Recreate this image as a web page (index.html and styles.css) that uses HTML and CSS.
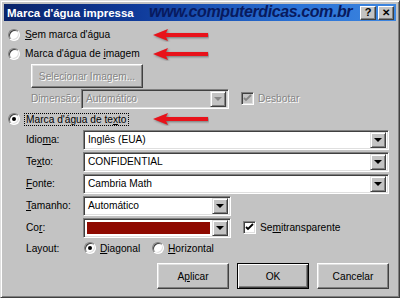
FILE: index.html
```html
<!DOCTYPE html>
<html lang="pt">
<head>
  <meta charset="UTF-8" />
  <title>Marca d'água impressa</title>
  <link rel="stylesheet" href="styles.css">
</head>
<body>
  <div class="window">
    <!-- ==== BARRA DE TÍTULO ==== -->
    <div class="titlebar">
      <span class="title">Marca d'água impressa</span>
      <span class="site">www.computerdicas.com.br</span>
      <div class="tb-buttons">
        <span class="tb-btn">?</span>
        <span class="tb-btn tb-close">✕</span>
      </div>
    </div>

    <!-- ==== CONTEÚDO ==== -->
    <div class="content">
      <div class="row r-radio">
        <span class="radio"></span>
        <span><u>S</u>em marca d'água</span>
      </div>
      <div class="row r-radio">
        <span class="radio"></span>
        <span>Marca d'água de <u>i</u>magem</span>
      </div>

      <div class="indent">
        <div class="row r-btn">
          <span class="button btn-disabled">Selecionar Imagem...</span>
        </div>
        <div class="row r-field">
          <span class="label label-dim disabled">Dimensão:</span>
          <span class="combo combo-short combo-disabled">
            <span class="combo-text">Automático</span>
            <span class="drop"><span class="tri"></span></span>
          </span>
          <span class="check check-disabled"><svg viewBox="0 0 9 9"><path d="M1 4 L3 6 L8 1" /></svg></span>
          <span class="disabled">Desbotar</span>
        </div>
      </div>

      <div class="row r-radio r-radio3">
        <span class="radio checked"></span>
        <span class="focus">Marca d'água de te<u>x</u>to</span>
      </div>

      <div class="form">
        <div class="row r-field">
          <span class="label">Idio<u>m</u>a:</span>
          <span class="combo combo-long">
            <span class="combo-text">Inglês (EUA)</span>
            <span class="drop"><span class="tri"></span></span>
          </span>
        </div>
        <div class="row r-field">
          <span class="label">Te<u>x</u>to:</span>
          <span class="combo combo-long">
            <span class="combo-text">CONFIDENTIAL</span>
            <span class="drop"><span class="tri"></span></span>
          </span>
        </div>
        <div class="row r-field">
          <span class="label"><u>F</u>onte:</span>
          <span class="combo combo-long">
            <span class="combo-text">Cambria Math</span>
            <span class="drop"><span class="tri"></span></span>
          </span>
        </div>
        <div class="row r-field">
          <span class="label"><u>T</u>amanho:</span>
          <span class="combo combo-short">
            <span class="combo-text">Automático</span>
            <span class="drop"><span class="tri"></span></span>
          </span>
        </div>
        <div class="row r-field">
          <span class="label">Co<u>r</u>:</span>
          <span class="combo combo-short">
            <span class="swatch"></span>
            <span class="drop"><span class="tri"></span></span>
          </span>
          <span class="check"><svg viewBox="0 0 9 9"><path d="M1 4 L3 6 L8 1" /></svg></span>
          <span>Se<u>m</u>itransparente</span>
        </div>
        <div class="row r-layout">
          <span class="label">Layout:</span>
          <span class="radio checked"></span>
          <span class="opt"><u>D</u>iagonal</span>
          <span class="radio"></span>
          <span><u>H</u>orizontal</span>
        </div>
      </div>

      <div class="actions">
        <span class="button">A<u>p</u>licar</span>
        <span class="button btn-default">OK</span>
        <span class="button">Cancelar</span>
      </div>
    </div>

    <!-- Setas vermelhas -->
    <svg class="arrow a1" viewBox="0 0 58 14"><path d="M2 7 L17 1 L15 5 L57 5 L57 9 L15 9 L17 13 Z" /></svg>
    <svg class="arrow a2" viewBox="0 0 58 14"><path d="M2 7 L17 1 L15 5 L57 5 L57 9 L15 9 L17 13 Z" /></svg>
    <svg class="arrow a3" viewBox="0 0 58 14"><path d="M2 7 L17 1 L15 5 L57 5 L57 9 L15 9 L17 13 Z" /></svg>
  </div>
</body>
</html>
```

FILE: styles.css
```css
:root {
  --clr-face: #c3c3c3;
  --clr-shadow: #808080;
  --clr-dark: #404040;
  --clr-light: #dfdfdf;
  --clr-disabled: #868686;
}

* { box-sizing: border-box; margin: 0; padding: 0; }
html, body { width: 400px; height: 298px; overflow: hidden; }
body {
  font-family: "Liberation Sans", Arial, sans-serif;
  font-size: 10.2px;
  color: #000;
  background: var(--clr-face);
}

.window {
  position: relative;
  width: 400px; height: 298px;
  background: var(--clr-face);
  border: 1px solid;
  border-color: var(--clr-light) var(--clr-dark) var(--clr-dark) var(--clr-light);
  box-shadow: inset 1px 1px #fff, inset -1px -1px var(--clr-shadow);
  padding: 3px 3px 0 3px;
}

/* ---------- Barra de título ---------- */
.titlebar {
  position: relative;
  height: 17px;
  display: flex;
  align-items: center;
  background: linear-gradient(to right, #0a246a 0%, #103c9c 35%, #2a72d6 75%, #3d86e0 100%);
  padding-left: 3px;
}
.title { color: #fff; font-weight: bold; font-size: 11.5px; }
.site {
  position: absolute;
  left: 145px; top: -1px;
  font-size: 16px;
  font-weight: bold;
  font-style: italic;
  color: #081a5e;
  letter-spacing: -0.4px;
}
.tb-buttons { margin-left: auto; display: flex; gap: 2px; padding-right: 2px; }
.tb-btn {
  width: 16px; height: 14px;
  background: var(--clr-face);
  border: 1px solid;
  border-color: #fff var(--clr-dark) var(--clr-dark) #fff;
  box-shadow: inset -1px -1px var(--clr-shadow);
  font-weight: bold; font-size: 11px;
  display: flex; align-items: center; justify-content: center;
  line-height: 1;
}
.tb-close { font-size: 10px; }

/* ---------- Conteúdo ---------- */
.content { padding: 4px 0 0 4px; }

.row { display: flex; align-items: center; }
.r-radio { height: 19px; gap: 5px; }
.r-radio3 { margin-top: 1px; height: 18px; }
.indent { padding-left: 23px; margin-top: 1px; }
.r-btn { height: 24px; }
.r-field { height: 19px; margin-top: 2px; }
.indent .r-field { margin-top: 0; height: 21px; }
.form { padding-left: 18px; margin-top: 2px; }
.form .r-field { margin-top: 3px; }
.form .r-field:first-child { margin-top: 0; }
.r-layout { height: 18px; margin-top: 2px; }

.label { width: 57px; flex: none; }
.label-dim { width: 50px; }

.disabled { color: var(--clr-disabled); text-shadow: 1px 1px #fff; }

.focus { outline: 1px dotted #000; outline-offset: 0; padding: 0 1px; }

/* Boutons radio */
.radio {
  width: 12px; height: 12px; flex: none;
  border-radius: 50%;
  background: #fff;
  border: 1px solid;
  border-color: var(--clr-shadow) #fff #fff var(--clr-shadow);
  box-shadow: inset 1px 1px var(--clr-dark), inset -1px -1px var(--clr-light);
  display: flex; align-items: center; justify-content: center;
}
.radio.checked::after {
  content: "";
  width: 4px; height: 4px;
  border-radius: 50%;
  background: #000;
}
.r-layout .radio { margin-right: 4px; }
.r-layout .label { width: 58px; }
.opt { width: 52px; }

/* Cases à cocher */
.check {
  width: 13px; height: 13px; flex: none;
  background: #fff;
  border: 1px solid;
  border-color: var(--clr-shadow) #fff #fff var(--clr-shadow);
  box-shadow: inset 1px 1px var(--clr-dark), inset -1px -1px var(--clr-light);
  margin: 0 4px 0 12px;
  display: flex; align-items: center; justify-content: center;
}
.check svg { width: 9px; height: 9px; }
.check path { fill: none; stroke: #000; stroke-width: 1.8; }
.check-disabled { background: var(--clr-face); }
.check-disabled path { stroke: var(--clr-disabled); }

/* Listes déroulantes */
.combo {
  height: 20px; flex: none;
  display: flex; align-items: center;
  background: #fff;
  border: 1px solid;
  border-color: var(--clr-shadow) #fff #fff var(--clr-shadow);
  box-shadow: inset 1px 1px var(--clr-dark), inset -1px -1px var(--clr-light);
  padding: 2px;
}
.combo-long { width: 306px; }
.combo-short { width: 148px; }
.combo-disabled { background: var(--clr-face); }
.combo-disabled .combo-text { color: var(--clr-disabled); text-shadow: 1px 1px #fff; }
.combo-disabled .tri { border-top-color: var(--clr-disabled); }
.combo-text { flex: 1; padding-left: 2px; white-space: nowrap; }
.swatch { flex: 1; align-self: stretch; background: #8e0900; margin: 1px 2px 1px 1px; }
.drop {
  width: 16px; height: 16px; flex: none;
  background: var(--clr-face);
  border: 1px solid;
  border-color: var(--clr-light) var(--clr-dark) var(--clr-dark) var(--clr-light);
  box-shadow: inset 1px 1px #fff, inset -1px -1px var(--clr-shadow);
  display: flex; align-items: center; justify-content: center;
}
.tri {
  width: 0; height: 0;
  border-left: 4px solid transparent;
  border-right: 4px solid transparent;
  border-top: 4px solid #000;
  margin-top: 1px;
}

/* Boutons */
.button {
  height: 24px;
  display: flex; align-items: center; justify-content: center;
  background: var(--clr-face);
  border: 1px solid;
  border-color: #fff var(--clr-dark) var(--clr-dark) #fff;
  box-shadow: inset -1px -1px var(--clr-shadow), inset 1px 1px var(--clr-light);
}
.btn-disabled { width: 112px; color: var(--clr-disabled); text-shadow: 1px 1px #fff; }
.actions {
  display: flex; justify-content: flex-end; gap: 8px;
  padding-right: 7px;
  margin-top: 6px;
}
.actions .button { width: 72px; height: 26px; }
.btn-default {
  border: 1px solid #000;
  box-shadow: inset 1px 1px #fff, inset -1px -1px var(--clr-dark), inset -2px -2px var(--clr-shadow);
}

/* Setas vermelhas (anotações) */
.arrow { position: absolute; width: 58px; height: 14px; left: 150px; }
.arrow path { fill: #e8121a; filter: drop-shadow(1px 1px 1px rgba(0,0,0,.4)); }
.a1 { top: 27px; }
.a2 { top: 46px; }
.a3 { top: 111px; }
```
